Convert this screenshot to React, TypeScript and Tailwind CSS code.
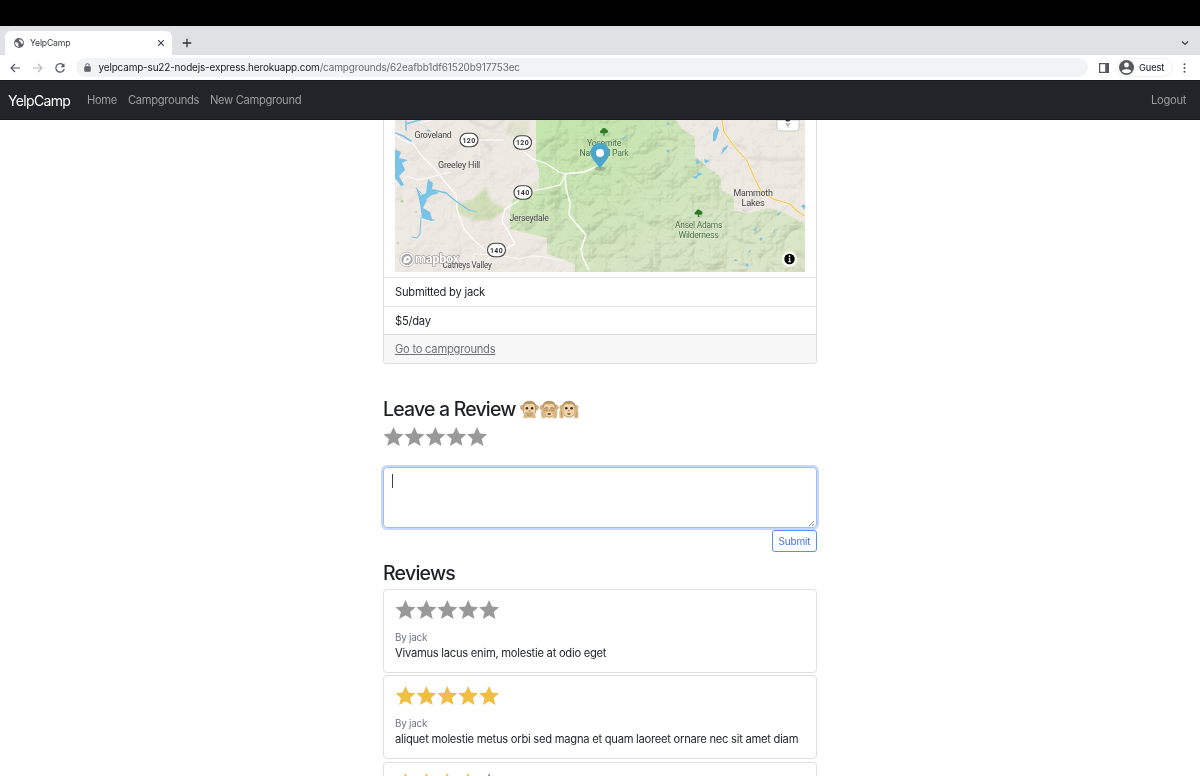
import React from "react";

const STAR = "M10 0.3 L12.9 6.9 L20 7.5 L14.6 12.2 L16.3 19.3 L10 15.5 L3.7 19.3 L5.4 12.2 L0 7.5 L7.1 6.9 Z";

function Stars({ filled }: { filled: number }) {
  return (
    <svg width="105" height="20" viewBox="0 0 105 20" className="block">
      {[0, 1, 2, 3, 4].map((i) => (
        <path key={i} d={STAR} transform={`translate(${0.5 + i * 20.9} -.3)`} fill={i < filled ? "#efbe45" : "#999999"} />
      ))}
    </svg>
  );
}

function MonkeyHead({ x }: { x: number }) {
  return (
    <g transform={`translate(${x} 0)`}>
      <circle cx="2.600" cy="7.500" r="2.200" fill="#e3b189" stroke="#a37a4a" strokeWidth=".5" />
      <circle cx="16.400" cy="7.500" r="2.200" fill="#e3b189" stroke="#a37a4a" strokeWidth=".5" />
      <path d="M9.500 .8C5 .8 2.600 3.500 2.600 8.200c0 5.500 2.200 9.300 6.900 9.300s6.900-3.800 6.900-9.300C16.400 3.500 14 .8 9.500 .8z" fill="#b8965f" />
      <path d="M9.500 4.500C7.800 2.700 4 3.700 4 7.400c0 2-.8 3-.2 5 .7 2.600 3 4.200 5.700 4.200s5-1.600 5.700-4.200c.6-2-.2-3-.2-5 0-3.700-3.800-4.700-5.500-2.900z" fill="#f0d3a8" />
      <circle cx="6.900" cy="8.300" r="1.250" fill="#3d2719" />
      <circle cx="12.100" cy="8.300" r="1.250" fill="#3d2719" />
      <path d="M8.700 10.700h1.600" stroke="#7a4f31" strokeWidth=".7" />
    </g>
  );
}

function Monkeys() {
  return (
    <svg width="59" height="19" viewBox="0 0 59 19" className="block">
      <MonkeyHead x={0} />
      <path d="M3.500 18.300c-.6-3 .8-5.400 3-6.200l3-.9 3 .9c2.200.8 3.600 3.200 3 6.200l-3-.2-3-2.200-3 2.200z" fill="#d8b987" />
      <path d="M6.500 13.200l3 1.200 3-1.200M7 15l2.500 1 2.500-1" fill="none" stroke="#a07a4c" strokeWidth=".6" />
      <MonkeyHead x={19.700} />
      <path d="M22 18.300c-1.400-3.500-1.300-7 .2-10.300l5.300-.7 1.500 2-1 2.500-2 1.300-.5 5.200zM36.400 18.300c1.400-3.500 1.300-7-.2-10.300l-5.300-.7-1.500 2 1 2.500 2 1.300.5 5.200z" fill="#d8b987" />
      <path d="M23.500 8.200l4.500.9M23.500 10.200l4 .5M34.900 8.200l-4.500.9M34.900 10.200l-4 .5" stroke="#b07d56" strokeWidth=".7" />
      <ellipse cx="29.200" cy="14" rx="1.800" ry="1.100" fill="#70452e" />
      <MonkeyHead x={39.400} />
      <path d="M39.800 18.300c-.9-4-.7-8 1.500-11.500l2-1 1.300 1.600-1.200 3.300.3 7.600zM58 18.300c.9-4 .7-8-1.500-11.500l-2-1-1.300 1.600 1.200 3.300-.3 7.600z" fill="#d8b987" />
      <path d="M41.500 8.500l2-1.500M56.300 8.500l-2-1.500M41.500 11v6M56.300 11v6" stroke="#a07a4c" strokeWidth=".5" />
      <path d="M47.200 13.200h3.400a1.700 1.500 0 0 1-3.400 0z" fill="#70452e" />
    </svg>
  );
}

function Shield({ x, y, n }: { x: number; y: number; n: string }) {
  return (
    <g>
      <rect x={x - 9} y={y - 6.700} width="18" height="13.400" rx="6.700" fill="#fff" stroke="#444" strokeWidth="1.100" />
      <text x={x} y={y + 2.500} textAnchor="middle" fontSize="7" fontWeight="700" fill="#333" letterSpacing=".3">{n}</text>
    </g>
  );
}

type LabelProps = { x: number; y: number; w: number; fill?: string; children: string };

function Label({ x, y, w, fill = "#454545", children }: LabelProps) {
  return (
    <text x={x} y={y} textAnchor="middle" textLength={w} lengthAdjust="spacingAndGlyphs" fontSize="8.600" fill={fill} stroke="#ffffff" strokeOpacity=".3" strokeWidth="1" paintOrder="stroke">
      {children}
    </text>
  );
}

function Tree({ x, y }: { x: number; y: number }) {
  return (
    <path transform={`translate(${x} ${y})`} d="M-3.500 1.500a1.800 1.800 0 0 1 1-3A2.600 2.600 0 0 1 2.400-2 1.900 1.900 0 0 1 2.600 1.700L.6 1.700.8 4h-1.600l.2-2.300z" fill="#2f7a25" />
  );
}

function CampMap() {
  return (
    <svg width="410" height="151.500" viewBox="0 0 410 151.500" className="block" fontFamily="Roboto, 'Liberation Sans', sans-serif">
      <defs>
        <filter id="relief" x="0" y="0" width="100%" height="100%" colorInterpolationFilters="sRGB">
          <feTurbulence type="turbulence" baseFrequency=".03 .036" numOctaves="4" seed="12" />
          <feColorMatrix values="0 0 0 0 0  0 0 0 0 0  0 0 0 0 0  1 0 0 0 0" />
          <feDiffuseLighting surfaceScale="6" diffuseConstant="1.200" lightingColor="#fff">
            <feDistantLight azimuth="225" elevation="56" />
          </feDiffuseLighting>
        </filter>
        <filter id="soft"><feGaussianBlur stdDeviation="1.500" /></filter>
        <clipPath id="greenClip">
          <path d="M141 0H281L287 9 300 17 300 36 312 47 325 56 327 71 339 76 339 90 352 94 373 88 390 93 410 104V152H180V145L168 139 152 134V118L115 109V93L118 79H128L144 69V50L141 42z" />
        </clipPath>
        <linearGradient id="forest" x1="0" y1="0" x2="0" y2="1">
          <stop stopColor="#bee3a5" /><stop offset=".6" stopColor="#c8e3b1" /><stop offset="1" stopColor="#d3e2bd" />
        </linearGradient>
        <linearGradient id="eastFade" x1="0" y1="0" x2="1" y2="0">
          <stop offset=".5" stopColor="#dce4ca" stopOpacity="0" /><stop offset=".85" stopColor="#dce4ca" stopOpacity=".6" />
        </linearGradient>
      </defs>
      <rect width="410" height="152" fill="#efe9e4" />
      <g filter="url(#soft)" fill="#d2dfb9">
        <path d="M62 84l15-4 14-13 5 14 15 8-12 10-18 2-20-9z" />
        <path d="M128 73l20-17 14-9 8 13-12 12-24 8z" opacity=".5" />
        <path d="M114 2l20-2v11l-11 9-12-5z" opacity=".5" />
      </g>
      <path d="M141 0H281L287 9 300 17 300 36 312 47 325 56 327 71 339 76 339 90 352 94 373 88 390 93 410 104V152H180V145L168 139 152 134V118L115 109V93L118 79H128L144 69V50L141 42z" fill="url(#forest)" filter="url(#none)" />
      <g clipPath="url(#greenClip)">
        <rect width="410" height="152" fill="url(#eastFade)" />
      </g>
      <rect width="410" height="152" filter="url(#relief)" className="mix-blend-multiply opacity-[.055]" />
      <g clipPath="url(#greenClip)">
        <rect width="410" height="152" filter="url(#relief)" className="mix-blend-multiply opacity-[.09]" />
      </g>
      <path d="M350 38h19l6 2 35-1M333 21l19 8M70 13l14 4 12 12M74 0l22 9 14-9" stroke="#d8d2cc" strokeWidth="2" fill="none" filter="url(#soft)" />
      <g fill="none" stroke="#fff" strokeLinejoin="round">
        <path strokeWidth="1.200" d="M0 14l8 6 10 4 9 12 13 13 11 14 10 12 1 15 7 19 10 11 11 10 15 4M108 20H83M129 32l9 7 14 5 12 8 7 2-6 11-17 4-20 3-5 9-13 8-3 12 6 10 7 13-8 4-12 5-9 7" />
        <path strokeWidth="1.400" d="M169 54l20-2 12-5M170 54l1 14 4 15-1 12 9 11 8 9-5 14 2 9 6 12" />
        <path strokeWidth=".8" d="M0 68l12-12 11 4 13-3 20-5M77 151l2-17 23 1 22 4 12-3 15 1 16 4M25 3l11-3M141 22l-24-5" />
      </g>
      <g fill="none" stroke="#7ac2e8" strokeLinejoin="round" strokeLinecap="round">
        <path strokeWidth="1.500" d="M11 1v9M0 13l8 3 8 5M11 4l10-3 4-1M39 70l12 3 11 9 12 8" />
        <path strokeWidth="1" d="M26 97l-1 17-3 4-5-1M29 76l-8-8M74 90l8 2" />
      </g>
      <g fill="#7ac2e8">
        <path d="M0 29l6 3-2 6 9 2-6 3 3 7-6 6 5 9-3 1-6-8z" />
        <path d="M33 59l5 4-1 6 7 4-7 2-7 5-5-4 6-3z" />
        <path d="M21 66l5 10 6 4-4 8 7 4 2 7 4 1-5 1-9-3-2-14z" />
        <path d="M322 6l2 4-3 10-3 2v-9zM332 28l-6 7 2-7 5-3zM302 38l3 5-4 1zM309 39l6 2-5 2zM303 52l5 2-7 3zM297 57l7-2-3 4zM33 9l4 3-6-1zM226 19l5-3-2 4zM272 2l3 2-3 1zM358 110l4-3-1 4zM380 111l-3 3 3-5zM353 132l3-3-1 4zM340 139l3 2h-4zM348 90l4 2-4-1zM382 94l4-2-3 4z" />
        <circle cx="273" cy="31" r="1.500" /><circle cx="366" cy="119" r="1.500" /><circle cx="352" cy="145" r="1.500" />
        <path d="M406 86l4-2v6z" />
      </g>
      <path d="M327 0l2 12 10 14 13 15 8 18 6 12 12 8 17 5 7 7 8 5" fill="none" stroke="#fff4cf" strokeWidth="2.200" />
      <path d="M327 0l2 12 10 14 13 15 8 18 6 12 12 8 17 5 7 7 8 5" fill="none" stroke="#ebc65e" strokeWidth="1.100" />
      <g fill="#a6d78f"><circle cx="7" cy="81" r="1.500" /><circle cx="21" cy="92" r="1" /><circle cx="3" cy="123" r="1" /></g>
      <Shield x={74} y={20} n="120" /><Shield x={127.500} y={22.500} n="120" />
      <Shield x={128} y={72.500} n="140" /><Shield x={101.500} y={130} n="140" />
      <Label x={38} y={18} w={37}>Groveland</Label>
      <Label x={64} y={48} w={42}>Greeley Hill</Label>
      <Label x={134} y={100.500} w={39}>Jerseydale</Label>
      <Label x={72} y={148} w={49}>Catheys Valley</Label>
      <Label x={358} y={75.500} w={39}>Mammoth</Label>
      <Label x={358} y={85.500} w={23}>Lakes</Label>
      <Label x={209} y={26} w={34} fill="#477342">Yosemite</Label>
      <Label x={209} y={36} w={49} fill="#477342">National Park</Label>
      <Label x={303.500} y={107.500} w={47} fill="#477342">Ansel Adams</Label>
      <Label x={303.500} y={117.500} w={40} fill="#477342">Wilderness</Label>
      <Tree x={209} y={11.500} /><Tree x={303.500} y={93} />
      <ellipse cx="205" cy="48.500" rx="6" ry="2" fill="#000" opacity=".18" />
      <path d="M205 49c-2-5-9.500-10-9.500-16.500a9.500 9.500 0 0 1 19 0C214.500 39 207 44 205 49z" fill="#4da5cb" />
      <circle cx="205" cy="33" r="4" fill="#fff" />
      <g fill="none" stroke="#999" strokeWidth=".5">
        <circle cx="12" cy="139.500" r="7.300" fill="#fff" /><circle cx="12" cy="139.500" r="5.400" fill="#aaa" />
      </g>
      <path d="M8.500 143c-.5-4 1-7 4-7a3.200 3.200 0 0 1 3.100 3.500c-.2 2.800-3.300 4-7.100 3.500z" fill="#fff" />
      <circle cx="12.500" cy="139.200" r="1.200" fill="#aaa" />
      <text x="20" y="143" textLength="44" lengthAdjust="spacingAndGlyphs" fontSize="12.500" fontWeight="700" fill="#fff" stroke="#858585" strokeWidth="1.100" paintOrder="stroke">mapbox</text>
      <circle cx="394.500" cy="139" r="7.800" fill="#fff" opacity=".7" />
      <circle cx="394.500" cy="139" r="5.200" fill="#000" />
      <path d="M393.600 138.300h1.100v3M393.200 141.700h2.800" stroke="#fff" strokeWidth="1.100" fill="none" /><circle cx="394.500" cy="136.200" r=".9" fill="#fff" />
      <path d="M382 0h22v8a3 3 0 0 1-3 3h-16a3 3 0 0 1-3-3z" fill="#fff" stroke="#c9c9c1" strokeWidth="1" />
      <path d="M390.300 0h5l-1 1.500h-3z" fill="#333" /><path d="M390 3h5.500l-2.700 5z" fill="#c2c2c2" />
    </svg>
  );
}

function TabStrip() {
  return (
    <div className="flex h-[29px] items-end justify-between bg-[#dfe1e5] pl-[5px] pr-[11px]">
      <div className="flex h-full items-end">
        <div className="flex h-[24px] w-[167px] items-center rounded-t-[6px] bg-white pl-[9px] pr-[7px]">
          <svg width="10" height="10" viewBox="0 0 10 10"><circle cx="5" cy="5" r="4.900" fill="#5f6368" /><path d="M1 4.200l2.200.3 1.300 1.200-.3 1.300.8 1.800C2.700 9 1 7 1 4.200zM5.500 1.200l-.6 1.700 1.500.7.5 1.700 1.800.8c.8-2.100-.5-4.500-3.200-4.900z" fill="#fff" /></svg>
          <span className="ml-[6px] flex-1 pt-px text-[8.700px] tracking-[-0.2px] text-[#3c4043]">YelpCamp</span>
          <svg width="8" height="8" viewBox="0 0 8 8"><path d="M1.200 1.200l5.600 5.600M6.800 1.200L1.200 6.800" stroke="#3c4043" strokeWidth="1.100" /></svg>
        </div>
        <svg className="mb-[7px] ml-[10px]" width="10" height="10" viewBox="0 0 10 10"><path d="M5 .7v8.600M.7 5h8.600" stroke="#303438" strokeWidth="1.300" /></svg>
      </div>
      <svg className="mb-[9px]" width="8" height="6" viewBox="0 0 8 6"><path d="M1 1.500l3 3 3-3" fill="none" stroke="#3c4043" strokeWidth="1.200" /></svg>
    </div>
  );
}

function Toolbar() {
  return (
    <div className="flex h-[25px] items-center bg-white pl-[10px] pr-[12px]">
      <svg width="11" height="10" viewBox="0 0 11 10"><path d="M10 5H1M5 1L1 5l4 4" fill="none" stroke="#55595e" strokeWidth="1.100" /></svg>
      <svg className="ml-[11px]" width="11" height="10" viewBox="0 0 11 10"><path d="M1 5h9M6 1l4 4-4 4" fill="none" stroke="#b6b8bb" strokeWidth="1.100" /></svg>
      <svg className="ml-[11px]" width="12" height="12" viewBox="0 0 12 12"><path d="M9.700 3.400A4.300 4.300 0 1 0 10.300 7" fill="none" stroke="#55595e" strokeWidth="1.200" /><path d="M10.500 1.300v4H6.500z" fill="#55595e" /></svg>
      <div className="ml-[10px] flex h-[19px] w-[1012px] items-center rounded-full bg-[#f1f3f4] pl-[8px]">
        <svg width="7" height="9" viewBox="0 0 7 9"><rect y="3.200" x=".3" width="6.400" height="5.500" rx=".7" fill="#5f6368" /><path d="M1.800 3.500V2.300a1.700 1.700 0 0 1 3.400 0v1.200" fill="none" stroke="#5f6368" /></svg>
        <span className="ml-[7.500px] w-[421px] whitespace-nowrap text-[9.95px] tracking-[-0.125px] text-[#686c70]"><span className="tracking-[-0.15px] text-[#202124]">yelpcamp-su22-nodejs-express.herokuapp.com</span>/campgrounds/62eafbb1df61520b917753ec</span>
      </div>
      <svg className="ml-[11px]" width="10" height="10" viewBox="0 0 10 10"><path fillRule="evenodd" d="M0 0h10v10H0zM1.200 1.200v7.600h5V1.200z" fill="#55595e" /></svg>
      <div className="ml-[8px] flex h-[19px] w-[56px] items-center rounded-full border border-[#f0f1f2] pl-[1px]">
        <svg width="15" height="15" viewBox="0 0 15 15"><circle cx="7.500" cy="7.500" r="7.500" fill="#55595e" /><circle cx="7.500" cy="5" r="2.400" fill="#fff" /><path d="M2.700 11c1-2.200 8.600-2.200 9.600 0-2.200 3-7.400 3-9.600 0z" fill="#fff" /></svg>
        <span className="ml-[5px] text-[9.200px] font-medium tracking-[-0.1px] text-[#303438]">Guest</span>
      </div>
      <svg className="ml-auto mr-[2px]" width="3" height="10" viewBox="0 0 3 10" fill="#4a4e52"><circle cx="1.500" cy="1.200" r="1" /><circle cx="1.500" cy="5" r="1" /><circle cx="1.500" cy="8.800" r="1" /></svg>
    </div>
  );
}

function Review({ filled, text }: { filled: number; text: string }) {
  return (
    <article className="mb-[2.3px] h-[84px] rounded-[4px] border border-[#dfdfdf] px-[11px] pt-[10px]">
      <Stars filled={filled} />
      <p className="mt-[9px] h-[16px] text-[9.800px] leading-[17px] tracking-[-0.19px] text-[#6c757d]">By jack</p>
      <p className="whitespace-nowrap text-[11.200px] leading-[17px] tracking-[-0.26px]">{text}</p>
    </article>
  );
}

export default function App() {
  return (
    <div className="flex h-[776px] w-[1200px] flex-col overflow-hidden bg-white font-['Inter','Liberation_Sans',sans-serif] text-[#1f2225]">
      <div className="h-[26px] shrink-0 bg-black" />
      <header className="shrink-0">
        <TabStrip />
        <Toolbar />
        <nav className="flex h-[40px] items-center border-y border-[#15181a] bg-[#212529] px-[8px] pt-px text-[11.200px] tracking-[-0.33px] text-[#9b9d9f]">
          <span className="w-[79px] text-[14px] tracking-[-0.65px] text-white">YelpCamp</span>
          <span className="w-[41px]">Home</span>
          <span className="w-[82px]">Campgrounds</span>
          <span>New Campground</span>
          <span className="ml-auto mr-[6px]">Logout</span>
        </nav>
      </header>
      <main className="mx-auto w-[434px]">
        <section className="overflow-hidden rounded-b-[4px] border border-t-0 border-[#dcdcdc] text-[11.200px] tracking-[-0.25px]">
          <div className="h-[157px] pl-[11px]"><CampMap /></div>
          <div className="flex h-[29px] items-center border-t border-[#e2e2e2] pl-[11px]">Submitted by jack</div>
          <div className="flex h-[28px] items-center border-t border-[#e2e2e2] pl-[11px] pt-[2px]">$5/day</div>
          <div className="flex h-[29px] items-center border-t border-[#dcdcdc] bg-[#f7f7f7] pl-[11px] pt-px text-[#6f7377]"><span className="underline">Go to campgrounds</span></div>
        </section>
        <section className="mt-[33px]">
          <h2 className="flex h-[24px] items-center text-[19.500px] font-medium leading-[24px]">
            <span className="w-[137px] whitespace-nowrap tracking-[-0.82px]">Leave a Review</span>
            <Monkeys />
          </h2>
          <div className="mt-[6px]"><Stars filled={0} /></div>
          <div className="mt-[20px] flex h-[61px] items-end justify-between rounded-[4px] border border-[#9fbdf6] px-[1px] shadow-[0_0_0_2px_#c5d7fb]">
            <span className="mb-[39px] ml-[7px] h-[14px] w-px bg-[#444]" />
            <svg width="8" height="8" viewBox="0 0 8 8"><path d="M2 7l5-5M5 7l2-2" stroke="#777" strokeWidth=".8" /></svg>
          </div>
          <div className="mt-[2px] flex justify-end">
            <button className="h-[22px] w-[45px] rounded-[3px] border border-[#5c8df5] bg-white text-[10px] tracking-[-0.15px] text-[#4a6ee0]">Submit</button>
          </div>
        </section>
        <section>
          <h2 className="mb-[4px] mt-[9px] h-[24px] text-[19.500px] font-medium leading-[24px] tracking-[-0.75px]">Reviews</h2>
          <Review filled={0} text="Vivamus lacus enim, molestie at odio eget" />
          <Review filled={5} text="aliquet molestie metus orbi sed magna et quam laoreet ornare nec sit amet diam" />
          <Review filled={4} text="" />
        </section>
      </main>
    </div>
  );
}
